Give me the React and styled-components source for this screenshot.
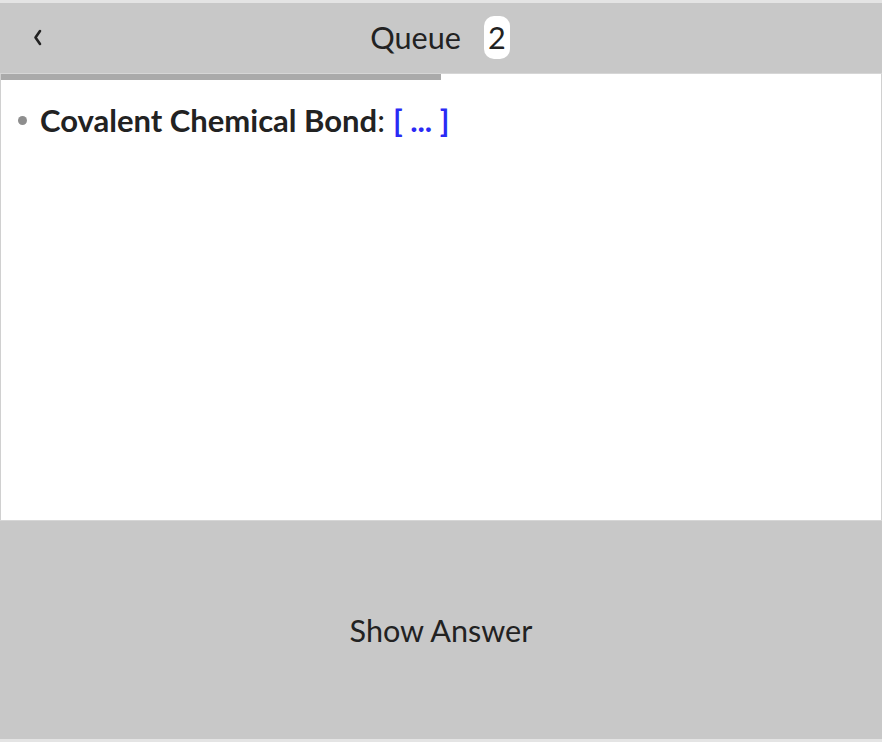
import React from 'react';
import styled, { createGlobalStyle } from 'styled-components';

const GlobalStyle = createGlobalStyle`
  html, body {
    margin: 0;
    padding: 0;
    background: #e4e4e4;
    font-family: Lato, 'Open Sans', sans-serif;
  }
`;

const Screen = styled.div`
  width: 882px;
  height: 742px;
  padding-top: 3px;
  box-sizing: border-box;
  display: flex;
  flex-direction: column;
  background: #e4e4e4;
`;

const Header = styled.div`
  height: 70px;
  background: #c8c8c8;
  display: flex;
  align-items: center;
  justify-content: center;
  position: relative;
  border-bottom: 1px solid #d6d6d6;
`;

const BackButton = styled.button`
  position: absolute;
  left: 28px;
  top: 20px;
  width: 20px;
  height: 28px;
  padding: 0;
  border: none;
  background: none;
  display: flex;
  align-items: center;
  justify-content: center;
  cursor: pointer;
`;

const Title = styled.div`
  display: flex;
  align-items: center;
  gap: 23px;
  font-size: 30.6px;
  color: #222;
  margin-top: -2px;
  margin-left: -2px;
`;

const Badge = styled.span`
  background: #fff;
  border-radius: 10px;
  padding: 0 4px;
  height: 43px;
  display: flex;
  align-items: center;
  font-size: 30.6px;
  color: #222;
`;

const Progress = styled.div`
  height: 6px;
  background: #fff;
  border-left: 1px solid #d0d0d0;
  border-right: 1px solid #d0d0d0;
`;

const ProgressFill = styled.div`
  height: 100%;
  background: #aaaaaa;
`;

const Card = styled.div`
  height: 440px;
  background: #fff;
  border-left: 1px solid #d0d0d0;
  border-right: 1px solid #d0d0d0;
  padding: 22px 16px;
  box-sizing: border-box;
`;

const List = styled.ul`
  margin: 0;
  padding: 0;
  list-style: none;
`;

const Item = styled.li`
  display: flex;
  align-items: center;
  font-size: 31px;
  line-height: 36px;
  color: #222;
  white-space: pre;
`;

const Dot = styled.span`
  width: 9px;
  height: 9px;
  border-radius: 50%;
  background: #8e8e8e;
  margin: 0 13px 0 1px;
`;

const Term = styled.b`
  font-weight: 700;
`;

const Cloze = styled.span`
  color: #2a2af5;
  font-weight: 700;
`;

const AnswerButton = styled.button`
  height: 219px;
  border: none;
  background: #c8c8c8;
  font-family: Lato, 'Open Sans', sans-serif;
  font-size: 30.6px;
  color: #222;
  padding: 0;
  cursor: pointer;
  border-top: 1px solid #d6d6d6;
`;

export default function App() {
  const reviewed = 0.5;
  return (
    <>
      <GlobalStyle />
      <Screen>
        <Header>
          <BackButton aria-label="Back">
            <svg width="12" height="20" viewBox="0 0 12 20">
              <polyline points="8,4 3.5,10.5 8,17" fill="none" stroke="#222" strokeWidth="2.6" strokeLinecap="round" strokeLinejoin="round" />
            </svg>
          </BackButton>
          <Title>
            Queue
            <Badge>2</Badge>
          </Title>
        </Header>
        <Progress>
          <ProgressFill style={{ width: `${reviewed * 100}%` }} />
        </Progress>
        <Card>
          <List>
            <Item>
              <Dot />
              <Term>Covalent Chemical Bond</Term>
              {': '}
              <Cloze>[ ... ]</Cloze>
            </Item>
          </List>
        </Card>
        <AnswerButton>Show Answer</AnswerButton>
      </Screen>
    </>
  );
}
